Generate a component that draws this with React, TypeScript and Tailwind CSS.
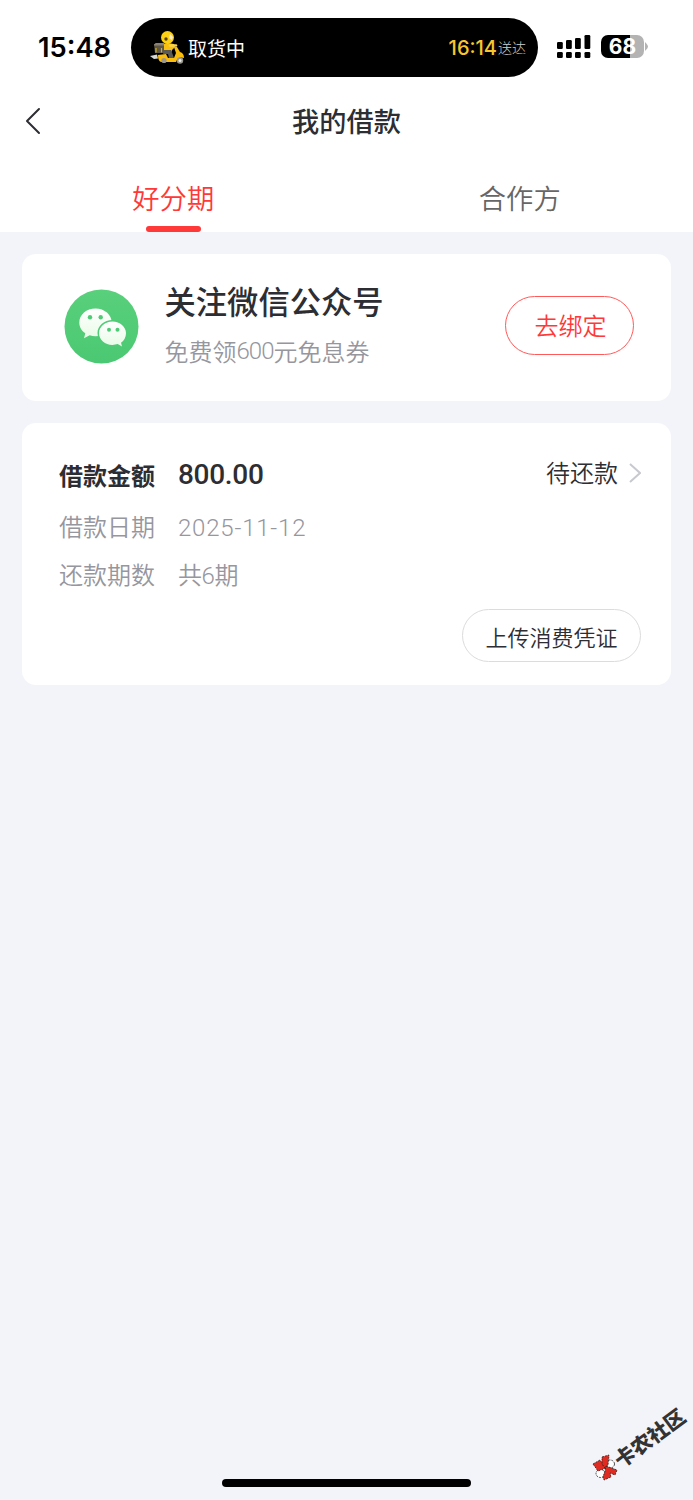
const tabs = [
  { label: "好分期", active: true },
  { label: "合作方", active: false },
];

const details = [
  { label: "借款日期", value: "2025-11-12", spacing: "tracking-[0.8px]" },
  { label: "还款期数", value: "共6期", spacing: "tracking-[-0.4px]" },
];

function Courier() {
  return (
    <svg className="w-[36px] h-[34px] shrink-0" viewBox="0 0 36 34">
      <path d="M0 25l7-1.500 1 4-4 .5z" fill="#d6d6d2" />
      <path d="M13 13l5-1 6 1 1 3-3 3-1 3h-8z" fill="#f8c012" />
      <path d="M4 13.500l2-1.500h8v10H5z" fill="#5d5646" />
      <path d="M4 13.500l2-1.500h8v2.500H4z" fill="#8a8373" />
      <path d="M6 17v4.500M11.500 17v4.500" stroke="#d5b01b" strokeWidth="1.200" />
      <path d="M8 24l8-1 2 4h6l2-5-2-6h3l3 5q4 1 4 6-6-2-8 4H11q-3-1-3-7z" fill="#fabd0d" />
      <path d="M14 19h7l3 8h-5l-1-4h-5z" fill="#5c5a55" />
      <path d="M20 14.500h6" stroke="#fcd44c" strokeWidth="2.500" strokeLinecap="round" />
      <circle cx="14" cy="29.500" r="2.600" fill="#9a978e" />
      <circle cx="30" cy="29.500" r="3.200" fill="#9a978e" />
      <circle cx="30" cy="29.500" r="1.500" fill="#eeeeea" />
      <circle cx="17.500" cy="6.500" r="6.500" fill="#fcd015" />
      <path d="M20 3l3 3-1 3-3-2z" fill="#f8ead0" />
      <circle cx="16" cy="8" r="1.700" fill="#51410f" />
    </svg>
  );
}

function Signal() {
  return (
    <svg className="w-[34px] h-[24px]" viewBox="0 0 34 24">
      <rect x="0" y="7" width="5.800" height="7" rx="1.300" />
      <rect x="9" y="5" width="5.800" height="9" rx="1.300" />
      <rect x="18" y="3" width="5.800" height="11" rx="1.300" />
      <rect x="27.500" y="0" width="5.800" height="14" rx="1.300" />
      <rect x="0" y="17" width="5.800" height="6" rx="1.300" />
      <rect x="9" y="17" width="5.800" height="6" rx="1.300" />
      <rect x="18" y="17" width="5.800" height="6" rx="1.300" />
      <rect x="27.500" y="17" width="5.800" height="6" rx="1.300" />
    </svg>
  );
}

function WechatLogo() {
  return (
    <svg className="w-[75px] h-[75px] shrink-0" viewBox="0 0 75 75">
      <defs>
        <linearGradient id="disc" x1="0" y1="0" x2="0" y2="1">
          <stop offset="0" stopColor="#59d07b" />
          <stop offset="1" stopColor="#4bc873" />
        </linearGradient>
        <linearGradient id="bubble" x1="0" y1="0" x2="0" y2="1">
          <stop offset="0" stopColor="#ffffff" />
          <stop offset="1" stopColor="#e9fbe6" />
        </linearGradient>
      </defs>
      <circle cx="37.500" cy="37.500" r="37" fill="url(#disc)" />
      <path
        d="M31.500 19.500c-9 0-16.200 6.200-16.200 14 0 4.500 2.300 8.300 6 10.800l-1.300 5 5.700-3c1.900.6 3.800.9 5.800.9 9 0 16.200-6 16.200-13.700s-7.200-14-16.200-14z"
        fill="url(#bubble)"
      />
      <path
        d="M48.500 31c-8.300 0-15 5.700-15 13s6.700 13 15 13c2 0 4-.3 5.800-1l4.500 2.500-1.200-4.300c3.700-2.500 5.900-6 5.900-10.200 0-7.300-6.700-13-15-13z"
        fill="#50cb76"
      />
      <path
        d="M48.500 32.500c-7.500 0-13.500 5.200-13.500 11.700s6 11.700 13.500 11.700c1.800 0 3.500-.3 5.200-.8l4.300 2.500-1-3.900c3-2.200 5-5.600 5-9.500 0-6.500-6-11.700-13.500-11.700z"
        fill="url(#bubble)"
      />
      <circle cx="26" cy="28.300" r="2.200" fill="#4fcb76" />
      <circle cx="36.700" cy="28.300" r="2.200" fill="#4fcb76" />
      <circle cx="45" cy="40.800" r="2" fill="#4fcb76" />
      <circle cx="53.500" cy="40.800" r="2" fill="#4fcb76" />
    </svg>
  );
}

function Watermark() {
  return (
    <div className="absolute left-[590px] top-[1404px] w-[103px] h-[80px]">
      <svg className="absolute left-0 bottom-0 w-[34px] h-[34px]" viewBox="0 0 34 34">
        <g stroke="#222" strokeWidth="0.800" strokeDasharray="2 1">
          <ellipse cx="20" cy="14" rx="4.500" ry="4" fill="#fff" />
          <ellipse cx="10.500" cy="23.500" rx="4.500" ry="4" fill="#fff" />
          <path d="M3 14l7-4 6 8-8 3z" fill="#df2b22" />
          <path d="M12 7l7-2-1 10-3 3-3-4z" fill="#df2b22" />
          <path d="M16 16l11 4-2 5-5-2 1 4-7 3-1-3 2-6z" fill="#df2b22" />
        </g>
      </svg>
      <span className="absolute left-[18px] top-[23px] text-[20.500px] leading-none font-black text-[#333] whitespace-nowrap -rotate-[36.5deg]">
        卡农社区
      </span>
    </div>
  );
}

export default function App() {
  return (
    <div className="relative flex flex-col w-[693px] h-[1500px] overflow-hidden bg-[#f3f4f9] text-[#2d2e33] font-['Noto_Sans_CJK_SC',sans-serif]">
      <header className="h-[232px] bg-white">
        {/* Status bar */}
        <div className="flex items-start h-[77px] pt-[18px] text-black">
          <span className="w-[131px] pl-[38px] pt-[13px] text-[27.300px] leading-[34px] font-semibold font-['Inter',sans-serif]">
            15:48
          </span>
          <div className="flex items-center w-[407px] h-[59px] pl-[19px] pr-[12px] rounded-full bg-black text-white">
            <Courier />
            <span className="ml-[2px] text-[19px] leading-[28px]">取货中</span>
            <span className="ml-auto text-[20px] font-medium text-[#f9c62d] font-['Inter',sans-serif]">16:14</span>
            <span className="ml-[1px] text-[14px] font-light text-[#d0d0d0]">送达</span>
          </div>
          <div className="flex items-start ml-[19px] pt-[17px]">
            <Signal />
            <div className="flex items-center justify-center ml-[10px] w-[43px] h-[23px] rounded-[7px] bg-linear-to-r from-black from-68% to-[#b3b3b3] to-68% text-white text-[21px] font-bold font-['Inter',sans-serif]">
              68
            </div>
            <svg className="w-[4px] h-[9px] mt-[7px]" viewBox="0 0 4 9">
              <path d="M1 0q3 3 3 4.500T1 9z" fill="#b3b3b3" />
            </svg>
          </div>
        </div>

        {/* Title bar */}
        <div className="grid grid-cols-[100px_1fr_100px] items-center h-[88px]">
          <svg className="w-[18px] h-[28px] ml-[24px]" viewBox="0 0 18 28" fill="none">
            <path d="M15 2L3 14l12 12" stroke="#2d2e33" strokeWidth="2" strokeLinecap="round" strokeLinejoin="round" />
          </svg>
          <h1 className="pb-[3px] text-center text-[27.200px] leading-[40px] font-medium">我的借款</h1>
        </div>

        {/* Tabs */}
        <div className="grid grid-cols-2 h-[67px]">
          {tabs.map((tab) => (
            <div key={tab.label} className="flex flex-col items-center justify-between pt-[12px]">
              <span
                className={
                  tab.active
                    ? "text-[27.300px] leading-[40px] font-[350] text-[#ff3838]"
                    : "text-[27.300px] leading-[40px] font-[350] text-[#666]"
                }
              >
                {tab.label}
              </span>
              {tab.active && <span className="w-[55px] h-[6px] rounded-full bg-[#ff3838]" />}
            </div>
          ))}
        </div>
      </header>

      <main className="flex flex-col gap-[22px] px-[22px] pt-[22px]">
        {/* Official account */}
        <section className="flex items-start h-[147px] rounded-[14px] bg-white pl-[42px] pr-[37px]">
          <div className="pt-[35px]">
            <WechatLogo />
          </div>
          <div className="flex flex-col pl-[25.500px] pt-[25px]">
            <h2 className="text-[31.300px] leading-[44px] font-medium">关注微信公众号</h2>
            <p className="flex mt-[11px] text-[24px] leading-[34px] font-[350] text-[#96969e]">
              免费领<span className="w-[37px] text-[24px] tracking-[-1px] font-['Roboto',sans-serif]">600</span>元免息券
            </p>
          </div>
          <button className="ml-auto mt-[42px] w-[129px] h-[59px] pb-[2px] pl-[2px] rounded-full border border-[#ff5a5a] text-[24px] font-[350] text-[#ff3838]">
            去绑定
          </button>
        </section>

        {/* Loan */}
        <section className="flex flex-col h-[262px] rounded-[14px] bg-white pl-[37px] pr-[30px] pt-[32px]">
          <div className="flex items-center h-[40px]">
            <span className="w-[119px] text-[24px] font-bold">借款金额</span>
            <span className="text-[28px] font-medium tracking-[-0.300px] font-['Roboto',sans-serif]">800.00</span>
            <span className="ml-auto pb-[6px] text-[24px] font-[350]">待还款</span>
            <svg className="w-[12px] h-[20px] ml-[11px] mb-[5px]" viewBox="0 0 12 20" fill="none">
              <path d="M1 1l10 9L1 19" stroke="#c8c9cf" strokeWidth="2" />
            </svg>
          </div>
          <div className="flex flex-col mt-[7px] text-[24px] leading-[48px] font-[350] text-[#96969e]">
            {details.map((row) => (
              <div key={row.label} className="flex items-baseline h-[48px]">
                <span className="w-[119px]">{row.label}</span>
                <span className={`font-['Roboto','Noto_Sans_CJK_SC',sans-serif] ${row.spacing}`}>{row.value}</span>
              </div>
            ))}
          </div>
          <button className="self-end mt-[11px] w-[179px] h-[53px] pt-[2px] rounded-full border border-[#dcdcdc] text-[22px] font-[350]">
            上传消费凭证
          </button>
        </section>
      </main>

      <div className="self-center mt-auto mb-[13px] w-[249px] h-[8px] rounded-full bg-black" />
      <Watermark />
    </div>
  );
}
